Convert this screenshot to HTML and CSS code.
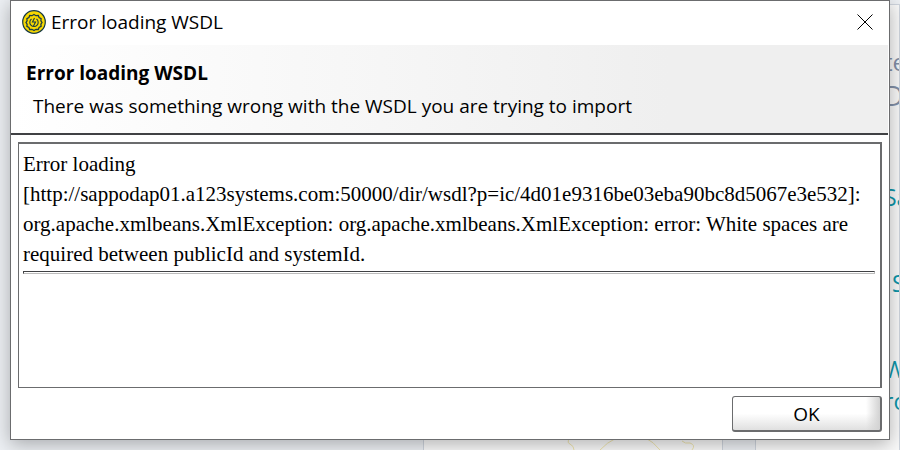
FILE: index.html
```html
<!DOCTYPE html>
<html lang="en">
<head>
<meta charset="utf-8">
<title>Error loading WSDL</title>
<link rel="stylesheet" href="styles.css">
</head>
<body>
<div class="backdrop" aria-hidden="true">
  <div class="panel">
    <svg class="gear" viewBox="0 0 150 20" width="150" height="20"><path d="M17 9Q15 13 18 14Q22 16 22 20M48 20Q54 13 66 7M92 7Q102 12 108 20M130 11Q133 14 138 13Q144 15 140 20"/></svg>
  </div>
  <div class="panel panel-side">
    <p class="heading">te</p>
    <p class="heading large">D</p>
    <p class="entry first">Sa</p>
    <p class="entry indent">S</p>
    <p class="entry">W</p>
    <p class="entry last">ro</p>
  </div>
</div>
<main class="dialog" role="alertdialog" aria-labelledby="title" aria-describedby="summary">
  <div class="titlebar">
    <svg class="logo" viewBox="0 0 24 24" width="24" height="24" aria-hidden="true">
      <circle cx="12" cy="12" r="11.300" fill="#f7d800" stroke="#193b45" stroke-width="1.200"/>
      <path d="M12 4.500l2 1.200 2.300-.2.800 2.100 2 1-.2 2.200 1.100 1.700-1.100 1.700.2 2.200-2 1-.8 2.100-2.300-.2-2 1.200-2-1.200-2.300.2-.8-2.100-2-1 .2-2.200L4 12.500l1.100-1.700-.2-2.200 2-1 .8-2.100 2.300.2z" fill="none" stroke="#193b45" stroke-width="1.300"/>
      <path d="M9.500 9a4.200 4.200 0 1 0 5 0M12.500 8l-2 4h3l-2 4" fill="none" stroke="#193b45" stroke-width="1.100"/>
    </svg>
    <h1 class="title" id="title">Error loading WSDL</h1>
    <button class="close" type="button" aria-label="Close">
      <svg viewBox="0 0 16 16" width="16" height="16" aria-hidden="true"><path d="M.5.5l15 15M15.500.5l-15 15" stroke="#000"/></svg>
    </button>
  </div>
  <header class="header">
    <h2 class="subtitle">Error loading WSDL</h2>
    <p class="summary" id="summary">There was something wrong with the WSDL you are trying to import</p>
  </header>
  <section class="message">
    <p class="error">Error loading <span class="url">[http://sappodap01.a123systems.com:50000/dir/wsdl?p=ic/4d01e9316be03eba90bc8d5067e3e532]:</span> org.apache.xmlbeans.XmlException: org.apache.xmlbeans.XmlException: error: White spaces are required between publicId and systemId.</p>
    <hr class="rule">
  </section>
  <footer class="actions"><button class="ok" type="button">OK</button></footer>
</main>
</body>
</html>
```
FILE: styles.css
```css
* {
  box-sizing: border-box;
}

body {
  margin: 0;
  height: 100vh;
  overflow: hidden;
  background: #edf0f4;
  color: #000;
  font-family: "Open Sans", sans-serif;
}

h1, h2, p {
  margin: 0;
}

.backdrop {
  position: absolute;
  inset: 0;
  display: flex;
  gap: 32px;
  padding: 4px 0 0 423px;
}

.panel {
  flex: 0 0 300px;
  display: flex;
  align-items: flex-end;
  justify-content: flex-end;
  padding-right: 20px;
  border: 1px solid #cfd5de;
  border-bottom: 0;
  background: #fafafa;
}

.gear {
  fill: none;
  stroke: #efe5ae;
}

.panel-side {
  flex: 1;
  display: block;
  overflow: hidden;
  padding: 40px 0 0 128px;
}

.heading {
  color: #8290a8;
  font-size: 24px;
  line-height: 34px;
}

.heading.large {
  font-size: 27px;
}

.entry {
  margin-top: 54px;
  color: #0d96aa;
  font-size: 23px;
  line-height: 32px;
}

.entry.first {
  margin-top: 68px;
}

.entry.indent {
  padding-left: 8px;
}

.entry.last {
  margin-top: 0;
}

.dialog {
  position: relative;
  display: flex;
  flex-direction: column;
  height: calc(100vh - 10px);
  margin: 0 10px;
  border: 1px solid #6b6c6e;
  background: #fff;
  box-shadow: 0 4px 18px rgba(0, 0, 0, 0.3);
}

.titlebar {
  display: flex;
  align-items: center;
  height: 44px;
  padding: 0 16px 2px 11px;
}

.title {
  flex: 1;
  margin-left: 5px;
  font-size: 19px;
  font-weight: 400;
  line-height: 28px;
}

.close {
  display: flex;
  padding: 0;
  border: 0;
  background: none;
}

.header {
  margin-right: 1px;
  padding: 14px 15px 13px;
  border-bottom: 2px solid #404144;
  background: linear-gradient(90deg, #fff, #efefef 75%);
}

.subtitle {
  font-size: 19px;
  line-height: 28px;
}

.summary {
  margin-top: 5px;
  padding-left: 7px;
  font-size: 19px;
  line-height: 28px;
}

.message {
  flex: 1;
  margin: 7px 7px 8px;
  padding: 5px 5px 0 4px;
  border: 1px solid #6b6c6e;
  border-width: 2px 2px 1px 1px;
}

.error {
  font-family: "Liberation Serif", serif;
  font-size: 21px;
  line-height: 30px;
}

.url {
  display: inline-block;
}

.rule {
  height: 3px;
  margin: 2px 0 0;
  border: 1px solid #bcbcbc;
  border-top-color: #404144;
  border-left-color: #404144;
}

.actions {
  display: flex;
  justify-content: flex-end;
  padding: 0 7px 7px;
}

.ok {
  width: 150px;
  height: 36px;
  border: 1px solid #6b6c6e;
  border-width: 1px 2px 2px 1px;
  border-radius: 3px;
  background: linear-gradient(270deg, #d2d2d2, transparent 14px), linear-gradient(#fff 50%, #e0e0e0);
  color: #000;
  font-family: inherit;
  font-size: 19px;
  line-height: 28px;
}
```
